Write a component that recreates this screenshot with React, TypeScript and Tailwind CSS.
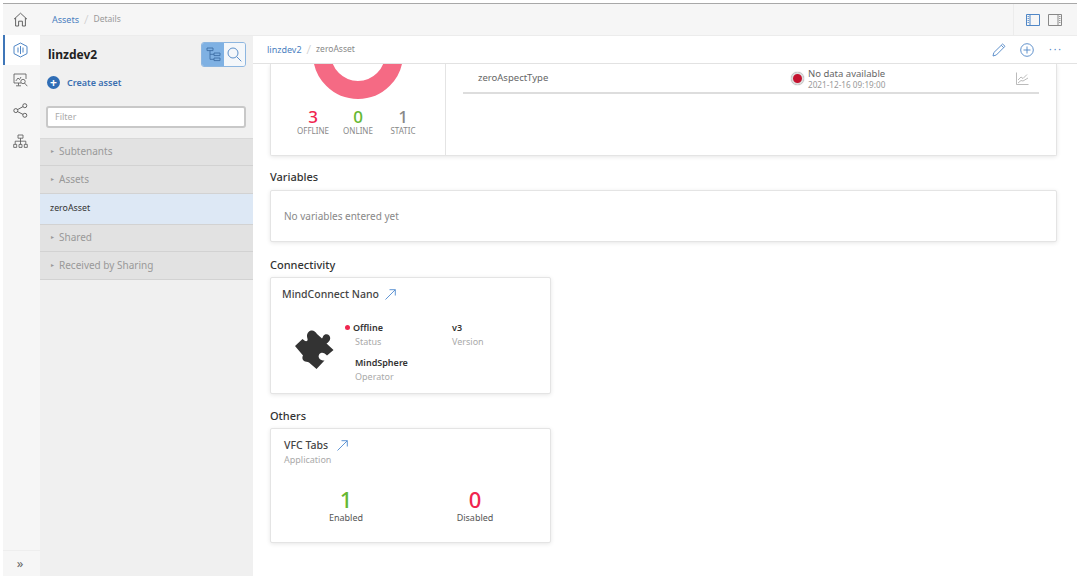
import React from 'react';

const HomeIcon = () => (
  <svg width="15" height="15" viewBox="0 0 15 15" fill="none" stroke="#555" strokeWidth="0.9">
    <path d="M1 7.200 7.500 1.200 14 7.200M2.600 6v8h3V9.200h3.800V14h3V6" />
  </svg>
);

const HexIcon = () => (
  <svg width="15" height="16" viewBox="0 0 15 16" fill="none" stroke="#4f86c6" strokeWidth="1">
    <path d="M7.500 1 14 4.400v7.200L7.500 15 1 11.600V4.400z" />
    <path d="M5 5.500v5M7.500 4v8M10 5.500v5" />
  </svg>
);

const MonitorIcon = () => (
  <svg width="15" height="15" viewBox="0 0 15 15" fill="none" stroke="#555" strokeWidth="0.8">
    <path d="M8 10H1V1h12v5M5.500 10v2.500M3 12.800h5" />
    <path d="M2.800 8 5 5l1.500 1.500L8 4" />
    <circle cx="10" cy="8.500" r="2.200" />
    <path d="m11.500 10 2.800 3.200" />
  </svg>
);

const ShareIcon = () => (
  <svg width="15" height="15" viewBox="0 0 15 15" fill="none" stroke="#555" strokeWidth="0.9">
    <circle cx="11.800" cy="2.700" r="2" />
    <circle cx="2.800" cy="7.600" r="2" />
    <circle cx="11.800" cy="12.300" r="2" />
    <path d="m4.600 6.600 5.400-3M4.600 8.600l5.400 2.800" />
  </svg>
);

const OrgIcon = () => (
  <svg width="15" height="15" viewBox="0 0 15 15" fill="none" stroke="#555" strokeWidth="0.8">
    <path d="M5 1h5v3.200H5zM7.500 4.200v6M2.200 10V7.200h10.600V10" />
    <path d="M.7 10.400h3v3h-3zM6 10.400h3v3H6zM11.300 10.400h3v3h-3z" />
  </svg>
);

const TreeIcon = () => (
  <svg width="15" height="15" viewBox="0 0 15 15" fill="none" stroke="#3d6ea5" strokeWidth="0.9">
    <path d="M1 1h6v2.600H1zM8 6h6v2.600H8zM8 11h6v2.600H8zM4 3.600v8.700h4M4 7.300h4" />
  </svg>
);

const SearchIcon = () => (
  <svg width="15" height="15" viewBox="0 0 15 15" fill="none" stroke="#5b8fca" strokeWidth="1">
    <circle cx="6" cy="6" r="5" />
    <path d="m9.700 9.700 4.600 4.600" />
  </svg>
);

const PanelLeft = () => (
  <svg width="14" height="12" viewBox="0 0 14 12" fill="none" stroke="#4f86c6">
    <path d="M.5.500h13v11H.5z" />
    <path d="M4 .5v11" />
    <path d="M1.500 2.500h1.500M1.500 4.500h1.500M1.500 6.500h1.500M1.500 8.500h1.500" strokeWidth="0.8" />
  </svg>
);

const PanelRight = () => (
  <svg width="14" height="12" viewBox="0 0 14 12" fill="none" stroke="#888">
    <path d="M.5.500h13v11H.5z" />
    <path d="M10 .5v11" />
    <path d="M11 2.500h1.500M11 4.500h1.500M11 6.500h1.500M11 8.500h1.500" strokeWidth="0.8" />
  </svg>
);

const PencilIcon = () => (
  <svg width="14" height="14" viewBox="0 0 14 14" fill="none" stroke="#4f86c6" strokeWidth="0.9">
    <path d="M1 13l.8-3.400L10.600 1 13 3.300 4.300 12z" />
    <path d="M9.300 2.300l2.400 2.400" />
  </svg>
);

const PlusCircle = () => (
  <svg width="14" height="14" viewBox="0 0 14 14" fill="none" stroke="#4f86c6" strokeWidth="0.9">
    <circle cx="7" cy="7" r="6.300" />
    <path d="M7 3.500v7M3.500 7h7" />
  </svg>
);

const ChartIcon = () => (
  <svg width="13" height="13" viewBox="0 0 13 13" fill="none" stroke="#aaa" strokeWidth="0.8">
    <path d="M.5.500v12h12" />
    <path d="M2 8 5 5l2 1.500 4-4M2 11l3-2.500 2 .5 5-3" />
  </svg>
);

const ArrowIcon = () => (
  <svg width="11" height="11" viewBox="0 0 11 11" fill="none" stroke="#4f8ad0" strokeWidth="0.9">
    <path d="M.5 10.500 10.300.7M4.500.7h5.800v5.800" />
  </svg>
);

const PuzzleIcon = () => (
  <svg width="40" height="42" viewBox="0 0 40 42" fill="#333333" className="block">
    <path d="M0 18 7.500 11C9 12.500 10.500 13.500 12 13 13.500 12 12 10 12 8 12 4.500 14.500 2.500 17 2.500 19 2.500 20.500 4 22 6L27 10.500C28 9 28 7.500 30 6.500 33 5.500 35.500 8 35.200 10.500 35 13 33 14.500 31.500 15.500L38.500 22 32 27.500C30.500 26 28.500 24.500 26.500 24.800 24 25.500 23 28 24 30 25 32 27.500 32.500 29.500 32.500L21.500 41 14 34.500C12.500 33.500 10.500 34 9 33 7 31.500 7 29 8 27.500Z" />
  </svg>
);

const Donut = () => (
  <svg width="90" height="36" viewBox="0 19 90 36" className="block">
    <circle cx="45" cy="9" r="36" fill="none" stroke="#f56a84" strokeWidth="18" />
  </svg>
);

const railItems = [
  { key: 'hex', icon: <HexIcon />, active: true, h: 'h-[30px]' },
  { key: 'monitor', icon: <MonitorIcon />, active: false, h: 'h-[31px]' },
  { key: 'share', icon: <ShareIcon />, active: false, h: 'h-[28px]' },
  { key: 'org', icon: <OrgIcon />, active: false, h: 'h-[34px]' },
];

const Rail = () => (
  <div className="flex w-[37px] shrink-0 flex-col bg-[#f6f6f6]">
    <div className="flex h-[31px] items-center justify-center pr-[3px]">
      <HomeIcon />
    </div>
    {railItems.map((item) => (
      <div
        key={item.key}
        className={`flex ${item.h} items-center justify-center border-l-2 pr-[5px] ${
          item.active ? 'border-[#3f76b8] bg-white' : 'border-transparent'
        }`}
      >
        {item.icon}
      </div>
    ))}
    <div className="mt-auto flex h-[26px] items-center justify-center border-t border-[#eeeeee] pr-[3px] text-[13px] leading-none text-[#666]">
      »
    </div>
  </div>
);

const TreeRow = ({ label }: { label: string }) => (
  <div className="flex h-[27.5px] items-center gap-[5px] border-b border-[#d2d2d2] bg-[#e2e2e2] pl-[11px] text-[10px] text-[#999]">
    <span className="text-[6px]">▸</span>
    {label}
  </div>
);

const Sidebar = () => (
  <div className="flex w-[213px] shrink-0 flex-col bg-[#f0f0f0]">
    <div className="flex items-center justify-between pl-[8px] pr-[7px] pt-[6px]">
      <span className="text-[12px] font-bold text-[#222]">linzdev2</span>
      <div className="flex h-[25px] w-[45px] overflow-hidden rounded-[3px] border border-[#8db6e0]">
        <div className="flex w-[22px] items-center justify-center bg-[#7fb1e3]">
          <TreeIcon />
        </div>
        <div className="flex flex-1 items-center justify-center bg-[#f4f7fa]">
          <SearchIcon />
        </div>
      </div>
    </div>
    <div className="mt-[9px] flex items-center gap-[7px] pl-[7px] text-[9px] font-semibold text-[#3a6fb0]">
      <span className="flex h-[13px] w-[13px] items-center justify-center rounded-full bg-[#2f6db5] text-[12px] font-bold leading-none text-white">
        +
      </span>
      Create asset
    </div>
    <div className="mx-[6px] mt-[16px] flex h-[22px] w-[200px] items-center rounded-[3px] border-2 border-[#c8c8c8] bg-white pl-[7px] text-[9px] text-[#aaa]">
      Filter
    </div>
    <div className="mt-[10px] border-t border-[#d8d8d8]">
      <TreeRow label="Subtenants" />
      <TreeRow label="Assets" />
      <div className="flex h-[31px] items-center border-b border-[#d2d2d2] bg-[#dde8f5] pl-[10px] text-[8.800px] text-[#333]">
        zeroAsset
      </div>
      <TreeRow label="Shared" />
      <TreeRow label="Received by Sharing" />
    </div>
  </div>
);

const Stat = ({ value, label, color }: { value: number; label: string; color: string }) => (
  <div className="flex w-[45px] flex-col items-center">
    <span className={`text-[17px] font-medium leading-[19px] ${color}`}>{value}</span>
    <span className="text-[8px] leading-[10px] text-[#888]">{label}</span>
  </div>
);

const SectionTitle = ({ children }: { children: React.ReactNode }) => (
  <h2 className="text-[11px] font-medium leading-[16px] text-[#333]">{children}</h2>
);

const Card = ({ className, children }: { className: string; children: React.ReactNode }) => (
  <div className={`rounded-[2px] border border-[#e4e4e4] bg-white shadow-[0_1px_4px_rgba(0,0,0,0.10)] ${className}`}>
    {children}
  </div>
);

const Field = ({ value, label, dot }: { value: string; label: string; dot?: boolean }) => (
  <div className="relative flex flex-col">
    {dot && <span className="absolute left-[-10px] top-[4px] h-[5px] w-[5px] rounded-full bg-[#f0264f]" />}
    <span className={`text-[9px] font-semibold leading-[13px] text-[#333] ${dot ? 'ml-[-2px]' : ''}`}>{value}</span>
    <span className="mt-[1px] text-[9px] leading-[13px] text-[#aaa]">{label}</span>
  </div>
);

const Main = () => (
  <div className="flex min-w-0 flex-1 flex-col bg-white">
    <div className="flex h-[28px] shrink-0 items-center border-b border-[#e2e2e2] pl-[14px] pr-[14px] text-[9px]">
      <span className="text-[#4b7fc0]">linzdev2</span>
      <span className="mx-[5px] text-[13px] font-light text-[#ccc]">/</span>
      <span className="text-[8.500px] text-[#888]">zeroAsset</span>
      <div className="ml-auto flex items-center gap-[14px] text-[#4f86c6]">
        <PencilIcon />
        <PlusCircle />
        <span className="ml-[1px] text-[10px] tracking-[2px]">···</span>
      </div>
    </div>

    <div className="flex-1 overflow-hidden pl-[17px] pr-[20px]">
      <Card className="flex h-[92px] rounded-t-none border-t-0">
        <div className="flex w-[175px] shrink-0 flex-col items-center border-r border-[#e4e4e4]">
          <Donut />
          <div className="mt-[7px] flex">
            <Stat value={3} label="OFFLINE" color="text-[#f0264f]" />
            <Stat value={0} label="ONLINE" color="text-[#65b832]" />
            <Stat value={1} label="STATIC" color="text-[#888]" />
          </div>
        </div>
        <div className="flex-1 pl-[17px] pr-[17px]">
          <div className="flex h-[30px] items-center border-b-2 border-[#dddddd] pl-[15px] pt-[1px]">
            <span className="w-[313px] text-[9.500px] text-[#666]">zeroAspectType</span>
            <span className="h-[13px] w-[13px] rounded-full border-2 border-[#ddd] bg-[#c4122f] shadow-[0_0_1px_#666]" />
            <div className="ml-[4px] flex flex-col">
              <span className="text-[9.500px] leading-[12px] text-[#666]">No data available</span>
              <span className="text-[8.200px] leading-[10px] text-[#999]">2021-12-16 09:19:00</span>
            </div>
            <div className="ml-auto mr-[10px]">
              <ChartIcon />
            </div>
          </div>
        </div>
      </Card>

      <div className="mt-[13px]">
        <SectionTitle>Variables</SectionTitle>
        <Card className="mt-[5px] flex h-[52px] items-center pl-[13px] pt-[1px] text-[10px] text-[#888]">
          No variables entered yet
        </Card>
      </div>

      <div className="mt-[15px]">
        <SectionTitle>Connectivity</SectionTitle>
        <Card className="mt-[4px] h-[117px] w-[281px] pl-[11px] pt-[9px]">
          <div className="flex items-center gap-[6px] text-[10.500px] font-medium text-[#444]">
            MindConnect Nano
            <ArrowIcon />
          </div>
          <div className="mt-[18px] flex">
            <div className="ml-[13px] mt-[7px] w-[38px] shrink-0">
              <PuzzleIcon />
            </div>
            <div className="ml-[22px] flex w-[97px] flex-col gap-[8px]">
              <Field value="Offline" label="Status" dot />
              <Field value="MindSphere" label="Operator" />
            </div>
            <Field value="v3" label="Version" />
          </div>
        </Card>
      </div>

      <div className="mt-[14px]">
        <SectionTitle>Others</SectionTitle>
        <Card className="mt-[4px] h-[115px] w-[281px] px-[13px] pt-[9px]">
          <div className="flex items-center gap-[9px] text-[10.500px] font-medium text-[#444]">
            VFC Tabs
            <ArrowIcon />
          </div>
          <div className="text-[9px] leading-[12px] text-[#aaa]">Application</div>
          <div className="mt-[22px] flex">
            <div className="ml-[12px] flex w-[100px] flex-col items-center">
              <span className="text-[22px] font-medium leading-[23px] text-[#65b832]">1</span>
              <span className="text-[9px] leading-[13px] text-[#555]">Enabled</span>
            </div>
            <div className="ml-[29px] flex w-[100px] flex-col items-center">
              <span className="text-[22px] font-medium leading-[23px] text-[#f0264f]">0</span>
              <span className="text-[9px] leading-[13px] text-[#555]">Disabled</span>
            </div>
          </div>
        </Card>
      </div>
    </div>
  </div>
);

export default function App() {
  return (
    <div className="flex h-[580px] w-[1077px] flex-col overflow-hidden bg-white pb-[4px] pl-[3px] pt-[3px] font-['Noto_Sans',sans-serif]">
      <div className="flex min-h-0 flex-1 border-t border-[#a8a8a8]">
        <Rail />
        <div className="flex min-w-0 flex-1 flex-col">
          <div className="flex h-[32px] shrink-0 items-center border-b border-[#ececec] bg-[#f6f6f6] pl-[12px] text-[9px]">
            <span className="text-[#4b7fc0]">Assets</span>
            <span className="mx-[5px] text-[13px] font-light text-[#ccc]">/</span>
            <span className="text-[8.500px] text-[#999]">Details</span>
            <div className="ml-auto flex h-full items-center gap-[8px] border-l border-[#ececec] pl-[12px] pr-[15px]">
              <PanelLeft />
              <PanelRight />
            </div>
          </div>
          <div className="flex min-h-0 flex-1">
            <Sidebar />
            <Main />
          </div>
        </div>
      </div>
    </div>
  );
}
